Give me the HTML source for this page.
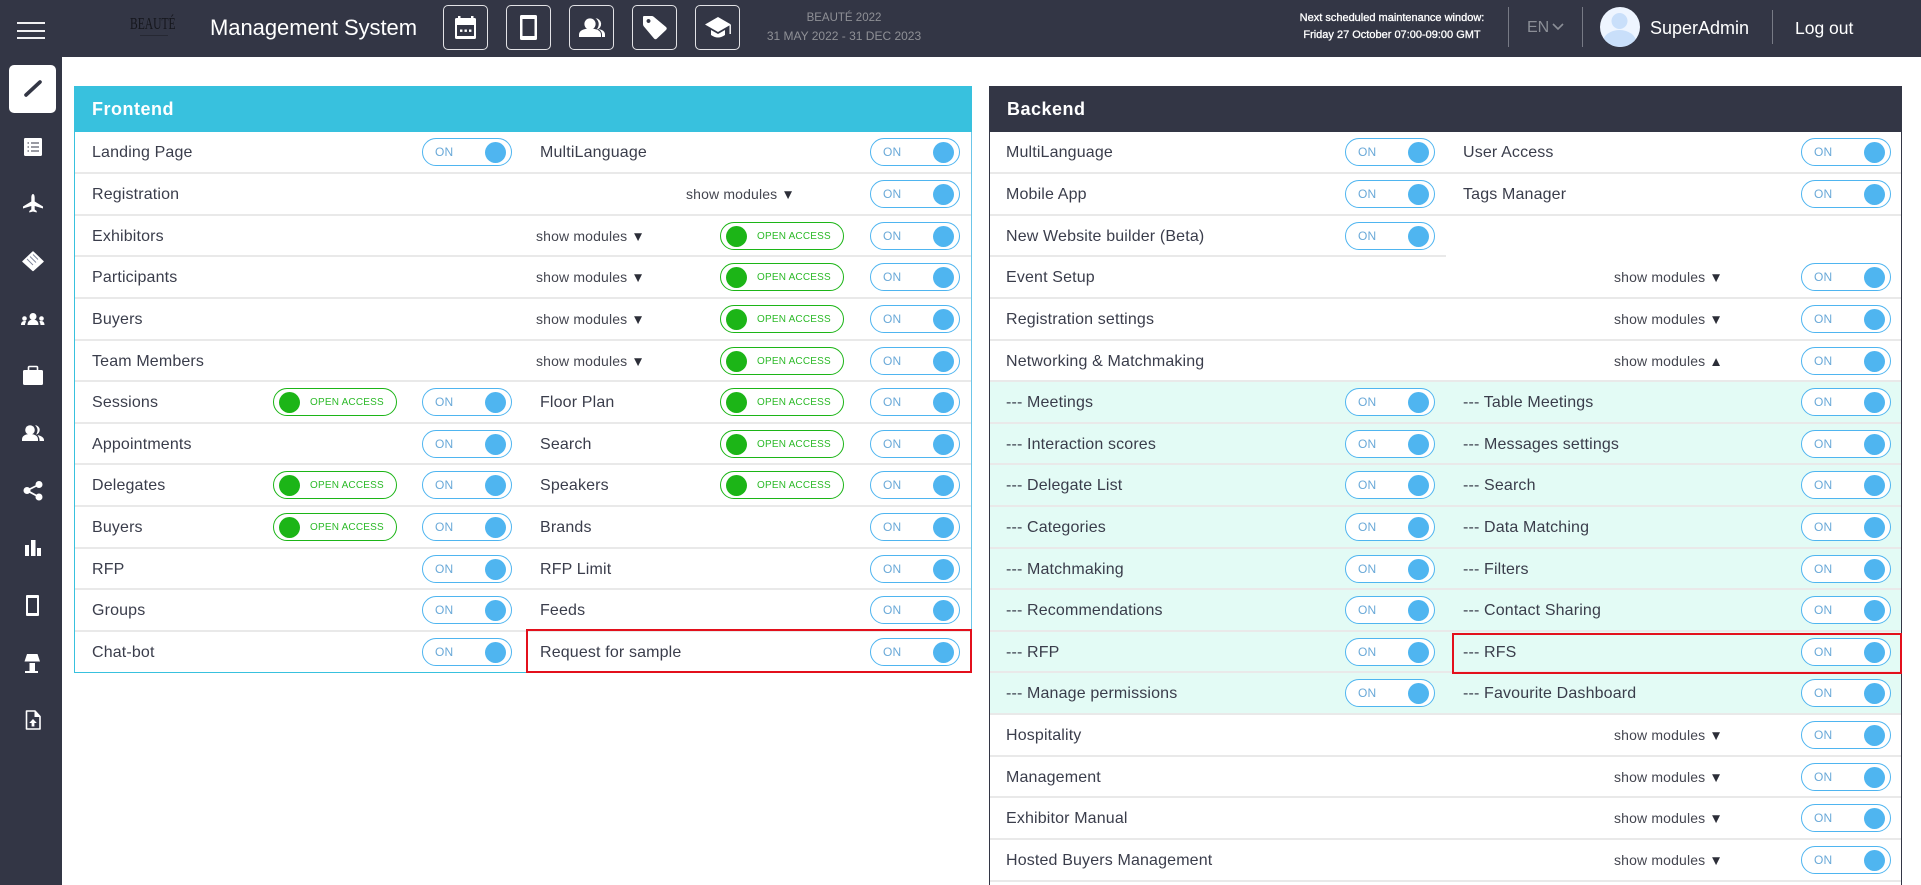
<!DOCTYPE html>
<html lang="en"><head><meta charset="utf-8"><title>Management System</title>
<style>
*{box-sizing:border-box}
html,body{margin:0;padding:0;width:1921px;height:885px;overflow:hidden;background:#fff;font-family:"Liberation Sans",sans-serif;color:#3a3d4b}
.a{position:absolute;white-space:nowrap}
.hd{left:0;top:0;width:1921px;height:57px;background:#333645}
.sd{left:0;top:0;width:62px;height:885px;background:#333645}
.ib{position:absolute;top:5px;width:45px;height:45px;border:1px solid #e2e2e5;border-radius:5px}
.w{color:#fff}
.panel{position:absolute;background:#fff}
.ph{position:absolute;top:86px;height:46px;line-height:46px;font-size:18px;font-weight:bold;color:#fff;padding-left:18px;letter-spacing:.5px}
.r{position:absolute;height:28px;line-height:29px;font-size:16px;letter-spacing:.15px}
.r::before{content:"";position:absolute;left:0;right:0;top:-8px;height:2px;background:#e9e9e9}
.r.n::before{display:none}
.fr{left:75px;width:896px}
.br{left:990px;width:911px}
.r>span{position:absolute;top:0;white-space:nowrap}
.fr>.l1{left:17px}.fr>.l2{left:465px}
.br>.l1{left:16px}.br>.l2{left:473px}
.sm{font-size:14px;letter-spacing:.15px;color:#444650;line-height:29px}
.sm b{font-size:13.500px;font-weight:normal;color:#2c2e38;line-height:20px}
.fr>.sm{left:461px}.fr>.sm2{left:611px}
.br>.sm{left:624px}
.t{position:absolute;top:0;width:90px;height:28px;border:1px solid #4fb5f0;border-radius:14px;background:#fff;color:#6aa9d8;font-size:12px;line-height:27px;padding-left:12px;letter-spacing:.2px}
.t i{position:absolute;right:5px;top:2.5px;width:21px;height:21px;border-radius:50%;background:#4fb5f0}
.fr>.t1{left:347px}.fr>.t2{left:795px}
.br>.t1{left:355px}.br>.t2{left:811px}
.o{position:absolute;top:0;width:124px;height:28px;border:1px solid #1cb517;border-radius:14px;background:#fff;color:#2cba28;font-size:10px;line-height:28px;padding-left:36px;letter-spacing:.2px}
.o i{position:absolute;left:5px;top:2.5px;width:21px;height:21px;border-radius:50%;background:#1cb517}
.fr>.o1{left:198px}.fr>.o2{left:645px}
.red{position:absolute;border:2px solid #e3101c}
.g{position:absolute;left:990px;width:911px;top:380px;height:333px;background:#e3fbf5}
</style></head><body>

<div class="a hd"></div>
<div class="a sd"></div>

<div class="a" style="left:17px;top:22px;width:28px;height:2px;background:#f0f0f2"></div>
<div class="a" style="left:17px;top:30px;width:28px;height:2px;background:#f0f0f2"></div>
<div class="a" style="left:17px;top:37px;width:28px;height:2px;background:#f0f0f2"></div>

<div class="a" style="left:130px;top:14px;font:17px/20px 'Liberation Serif',serif;color:#15161c;transform:scaleX(.68);transform-origin:left">BEAUTÉ</div>
<div class="a" style="left:140px;top:35px;width:28px;height:1px;background:#262833"></div>

<div class="a w" style="left:210px;top:13px;font-size:22px;line-height:30px;letter-spacing:-.05px">Management System</div>

<div class="ib" style="left:443px"></div>
<div class="ib" style="left:506px"></div>
<div class="ib" style="left:569px"></div>
<div class="ib" style="left:632px"></div>
<div class="ib" style="left:695px"></div>

<svg class="a" style="left:0;top:0" width="800" height="57" viewBox="0 0 800 57">
 <g fill="#fff">
  <rect x="455" y="18" width="21" height="21" rx="1.5"/><rect x="458" y="16" width="2.5" height="3"/><rect x="471" y="16" width="2.5" height="3"/>
  <rect x="457" y="25" width="17" height="11" fill="#333645"/>
  <rect x="460" y="29.500" width="2.400" height="2.400"/><rect x="464.500" y="29.500" width="2.400" height="2.400"/><rect x="469" y="29.500" width="2.400" height="2.400"/>
  <rect x="520" y="15" width="17" height="25" rx="1.5"/><rect x="522.500" y="19" width="12" height="17" fill="#333645"/>
  <circle cx="590" cy="24" r="5.600"/><path d="M579 37v-2.500c0-4 5-6 11-6s11 2 11 6V37z"/>
  <path d="M595.500 18.300a5.700 5.700 0 0 1 1 11.300c1.500-1.500 2.200-3.500 2.200-5.600s-1.200-4.400-3.200-5.700zM598.500 29c4 .7 6.500 2.500 6.500 5.500V37h-3v-2.500c0-2.300-1.500-4-3.500-5.500z"/>
  <path fill-rule="evenodd" d="M644 16h8q1 0 2 1l12 10q1.500 1.500 0 3l-9 8.500q-1.500 1.500-3 0l-10.500-12.500q-.5-1-.5-2v-7q0-1 1-1zM648.500 19a2 2 0 1 0 .01 0z"/>
  <path d="M718 17l13 7.500-13 7.500-13-7.500z"/><path d="M711 30l7 4 7-4v5q-7 5-14 0z"/><rect x="729.500" y="25" width="1.400" height="9"/>
 </g>
</svg>

<div class="a" style="left:766px;width:156px;top:10px;text-align:center;font-size:11.500px;line-height:16px;color:#8f9096">BEAUTÉ 2022</div>
<div class="a" style="left:756px;width:176px;top:28px;text-align:center;font-size:12px;line-height:16px;color:#8f9096">31 MAY 2022 - 31 DEC 2023</div>

<div class="a w" style="left:1292px;width:200px;top:10px;text-align:center;font-size:11px;line-height:16px;-webkit-text-stroke:.3px #fff">Next scheduled maintenance window:</div>
<div class="a w" style="left:1292px;width:200px;top:27px;text-align:center;font-size:11px;line-height:16px;-webkit-text-stroke:.3px #fff">Friday 27 October 07:00-09:00 GMT</div>

<div class="a" style="left:1508px;top:7px;width:1px;height:40px;background:#777a85"></div>
<div class="a" style="left:1582px;top:7px;width:1px;height:40px;background:#777a85"></div>
<div class="a" style="left:1772px;top:10px;width:1px;height:34px;background:#777a85"></div>
<div class="a" style="left:1527px;top:18px;font-size:16px;line-height:20px;color:#8b8e96">EN</div>
<svg class="a" style="left:1551px;top:22px" width="14" height="10" viewBox="0 0 14 10"><path d="M2 2l5 5 5-5" fill="none" stroke="#8b8e96" stroke-width="1.600"/></svg>

<svg class="a" style="left:1600px;top:7px" width="40" height="40" viewBox="0 0 40 40">
 <defs><clipPath id="c"><circle cx="20" cy="20" r="20"/></clipPath></defs>
 <g clip-path="url(#c)"><rect width="40" height="40" fill="#eef5ff"/><circle cx="19.500" cy="14" r="8" fill="#c9dffa"/><ellipse cx="19.500" cy="36" rx="17" ry="13" fill="#c9dffa"/></g>
</svg>
<div class="a w" style="left:1650px;top:16px;font-size:18px;line-height:24px">SuperAdmin</div>
<div class="a w" style="left:1795px;top:16px;font-size:17.500px;line-height:24px">Log out</div>

<div class="a" style="left:9px;top:65px;width:47px;height:48px;background:#fff;border-radius:5px"></div>
<svg class="a" style="left:0;top:0" width="62" height="885" viewBox="0 0 62 885">
 <path d="M26 95L40 82" stroke="#333645" stroke-width="3.600" stroke-linecap="round" fill="none"/>
 <g fill="#fff">
  <rect x="24" y="138" width="18" height="18" rx="1.200"/>
  <path d="M27.500 142.500h1.500v1h-1.500zM27.500 146.500h1.500v1h-1.500zM27.500 150.500h1.500v1h-1.500z" fill="#333645"/>
  <path d="M31 142.500h8v1h-8zM31 146.500h8v1h-8zM31 150.500h8v1h-8z" fill="#333645"/>
  <path d="M33 194c1.200 0 1.700 2 1.700 4v3.500l8.300 5v2l-8.300-2.500v3.500l2 1.500v1.500l-3.700-1-3.700 1v-1.500l2-1.500v-3.500l-8.300 2.500v-2l8.300-5v-3.500c0-2 .5-4 1.700-4z"/>
  <path d="M33 252l10 9.500-10 9-10-9z" stroke="#fff" stroke-width="1.500" stroke-linejoin="round"/>
  <path d="M27 259l6 6M30 256.500l6 6M33 254.500l5 5" stroke="#7f859b" stroke-width=".9" fill="none"/>
  <circle cx="33" cy="316.500" r="3.500"/><path d="M27.500 325c0-3.500 2-5.500 5.500-5.500s5.500 2 5.500 5.500z"/>
  <circle cx="24.500" cy="318.500" r="2.300"/><path d="M21 325c0-2.500 1.200-4 3.500-4 .8 0 1.200.2 1.700.5-.7 1-1.200 2-1.200 3.500z"/>
  <circle cx="41.500" cy="318.500" r="2.300"/><path d="M44.500 325c0-2.500-1.200-4-3.500-4-.8 0-1.200.2-1.700.5.7 1 1.200 2 1.200 3.500z"/>
  <rect x="23" y="370" width="20" height="15" rx="1.500"/>
  <path d="M28.500 371v-3.500q0-1 1-1h7q1 0 1 1v3.500" fill="none" stroke="#fff" stroke-width="1.600"/>
  <circle cx="30" cy="430" r="4.800"/><path d="M22 441v-1.500c0-3.500 3-5.500 8-5.500s8 2 8 5.500V441z"/>
  <path d="M35 425.300a4.700 4.700 0 0 1 1 9.300c1-1.500 1.500-3 1.500-4.600s-.9-3.500-2.500-4.700zM37.500 435c3.500.7 6.500 2.500 6.500 5V441h-4.500v-1c0-2-1-3.500-2-5z"/>
  <g stroke="#fff" stroke-width="1.800"><path d="M39 484.500L27 490.500 39 497" fill="none"/></g>
  <circle cx="39" cy="484.500" r="3.500"/><circle cx="27" cy="490.500" r="3.500"/><circle cx="39" cy="497" r="3.500"/>
  <rect x="25" y="545" width="4" height="11"/><rect x="31" y="540" width="4.500" height="16"/><rect x="37" y="548" width="4" height="8"/>
  <rect x="26" y="595" width="13" height="21" rx="1"/><rect x="28" y="598" width="9" height="15" fill="#333645"/>
  <path d="M27 654h10.500l2.500 7.500H24.500z"/><rect x="29.500" y="663" width="5.500" height="8"/><rect x="25" y="671" width="13" height="2"/>
  <path d="M26.500 711h8.500l5 5.500v12.500h-13.500z" fill="#333645" stroke="#fff" stroke-width="1.600" stroke-linejoin="round"/>
  <path d="M34.500 711v6h5.500z"/>
  <path d="M33 719l3.800 4h-2.400v3.500h-2.800V723h-2.400z"/>
 </g>
</svg>

<!-- Frontend -->
<div class="panel" style="left:74px;top:132px;width:898px;height:541px;border:1px solid #38c1de;border-top:0;border-right:1px solid #6cc6ea"></div>
<div class="ph" style="left:74px;width:898px;background:#38c1de">Frontend</div>

<div class="r fr n" style="top:138px"><span class="l1">Landing Page</span><div class="t t1">ON<i></i></div><span class="l2">MultiLanguage</span><div class="t t2">ON<i></i></div></div>
<div class="r fr" style="top:180px"><span class="l1">Registration</span><span class="sm sm2">show modules <b>▼</b></span><div class="t t2">ON<i></i></div></div>
<div class="r fr" style="top:222px"><span class="l1">Exhibitors</span><span class="sm">show modules <b>▼</b></span><div class="o o2"><i></i>OPEN ACCESS</div><div class="t t2">ON<i></i></div></div>
<div class="r fr" style="top:263px"><span class="l1">Participants</span><span class="sm">show modules <b>▼</b></span><div class="o o2"><i></i>OPEN ACCESS</div><div class="t t2">ON<i></i></div></div>
<div class="r fr" style="top:305px"><span class="l1">Buyers</span><span class="sm">show modules <b>▼</b></span><div class="o o2"><i></i>OPEN ACCESS</div><div class="t t2">ON<i></i></div></div>
<div class="r fr" style="top:347px"><span class="l1">Team Members</span><span class="sm">show modules <b>▼</b></span><div class="o o2"><i></i>OPEN ACCESS</div><div class="t t2">ON<i></i></div></div>
<div class="r fr" style="top:388px"><span class="l1">Sessions</span><div class="o o1"><i></i>OPEN ACCESS</div><div class="t t1">ON<i></i></div><span class="l2">Floor Plan</span><div class="o o2"><i></i>OPEN ACCESS</div><div class="t t2">ON<i></i></div></div>
<div class="r fr" style="top:430px"><span class="l1">Appointments</span><div class="t t1">ON<i></i></div><span class="l2">Search</span><div class="o o2"><i></i>OPEN ACCESS</div><div class="t t2">ON<i></i></div></div>
<div class="r fr" style="top:471px"><span class="l1">Delegates</span><div class="o o1"><i></i>OPEN ACCESS</div><div class="t t1">ON<i></i></div><span class="l2">Speakers</span><div class="o o2"><i></i>OPEN ACCESS</div><div class="t t2">ON<i></i></div></div>
<div class="r fr" style="top:513px"><span class="l1">Buyers</span><div class="o o1"><i></i>OPEN ACCESS</div><div class="t t1">ON<i></i></div><span class="l2">Brands</span><div class="t t2">ON<i></i></div></div>
<div class="r fr" style="top:555px"><span class="l1">RFP</span><div class="t t1">ON<i></i></div><span class="l2">RFP Limit</span><div class="t t2">ON<i></i></div></div>
<div class="r fr" style="top:596px"><span class="l1">Groups</span><div class="t t1">ON<i></i></div><span class="l2">Feeds</span><div class="t t2">ON<i></i></div></div>
<div class="r fr" style="top:638px"><span class="l1">Chat-bot</span><div class="t t1">ON<i></i></div><span class="l2">Request for sample</span><div class="t t2">ON<i></i></div></div>
<div class="red" style="left:526px;top:629px;width:446px;height:44px"></div>

<!-- Backend -->
<div class="panel" style="left:989px;top:132px;width:913px;height:753px;border-left:1px solid #333645;border-right:1px solid #333645"></div>
<div class="ph" style="left:989px;width:913px;background:#333645">Backend</div>
<div class="g"></div>

<div class="r br n" style="top:138px"><span class="l1">MultiLanguage</span><div class="t t1">ON<i></i></div><span class="l2">User Access</span><div class="t t2">ON<i></i></div></div>
<div class="r br" style="top:180px"><span class="l1">Mobile App</span><div class="t t1">ON<i></i></div><span class="l2">Tags Manager</span><div class="t t2">ON<i></i></div></div>
<div class="r br" style="top:222px"><span class="l1">New Website builder (Beta)</span><div class="t t1">ON<i></i></div></div>
<div class="r br n" style="top:263px"><span class="l1">Event Setup</span><span class="sm">show modules <b>▼</b></span><div class="t t2">ON<i></i></div></div>
<div class="a" style="left:990px;top:255px;width:456px;height:2px;background:#e9e9e9"></div>
<div class="r br" style="top:305px"><span class="l1">Registration settings</span><span class="sm">show modules <b>▼</b></span><div class="t t2">ON<i></i></div></div>
<div class="r br" style="top:347px"><span class="l1">Networking &amp; Matchmaking</span><span class="sm">show modules <b>▲</b></span><div class="t t2">ON<i></i></div></div>
<div class="r br" style="top:388px"><span class="l1">--- Meetings</span><div class="t t1">ON<i></i></div><span class="l2">--- Table Meetings</span><div class="t t2">ON<i></i></div></div>
<div class="r br" style="top:430px"><span class="l1">--- Interaction scores</span><div class="t t1">ON<i></i></div><span class="l2">--- Messages settings</span><div class="t t2">ON<i></i></div></div>
<div class="r br" style="top:471px"><span class="l1">--- Delegate List</span><div class="t t1">ON<i></i></div><span class="l2">--- Search</span><div class="t t2">ON<i></i></div></div>
<div class="r br" style="top:513px"><span class="l1">--- Categories</span><div class="t t1">ON<i></i></div><span class="l2">--- Data Matching</span><div class="t t2">ON<i></i></div></div>
<div class="r br" style="top:555px"><span class="l1">--- Matchmaking</span><div class="t t1">ON<i></i></div><span class="l2">--- Filters</span><div class="t t2">ON<i></i></div></div>
<div class="r br" style="top:596px"><span class="l1">--- Recommendations</span><div class="t t1">ON<i></i></div><span class="l2">--- Contact Sharing</span><div class="t t2">ON<i></i></div></div>
<div class="r br" style="top:638px"><span class="l1">--- RFP</span><div class="t t1">ON<i></i></div><span class="l2">--- RFS</span><div class="t t2">ON<i></i></div></div>
<div class="r br" style="top:679px"><span class="l1">--- Manage permissions</span><div class="t t1">ON<i></i></div><span class="l2">--- Favourite Dashboard</span><div class="t t2">ON<i></i></div></div>
<div class="r br" style="top:721px"><span class="l1">Hospitality</span><span class="sm">show modules <b>▼</b></span><div class="t t2">ON<i></i></div></div>
<div class="r br" style="top:763px"><span class="l1">Management</span><span class="sm">show modules <b>▼</b></span><div class="t t2">ON<i></i></div></div>
<div class="r br" style="top:804px"><span class="l1">Exhibitor Manual</span><span class="sm">show modules <b>▼</b></span><div class="t t2">ON<i></i></div></div>
<div class="r br" style="top:846px"><span class="l1">Hosted Buyers Management</span><span class="sm">show modules <b>▼</b></span><div class="t t2">ON<i></i></div></div>
<div class="a" style="left:990px;top:880px;width:911px;height:2px;background:#e9e9e9"></div>
<div class="red" style="left:1452px;top:633px;width:450px;height:41px"></div>

</body></html>
